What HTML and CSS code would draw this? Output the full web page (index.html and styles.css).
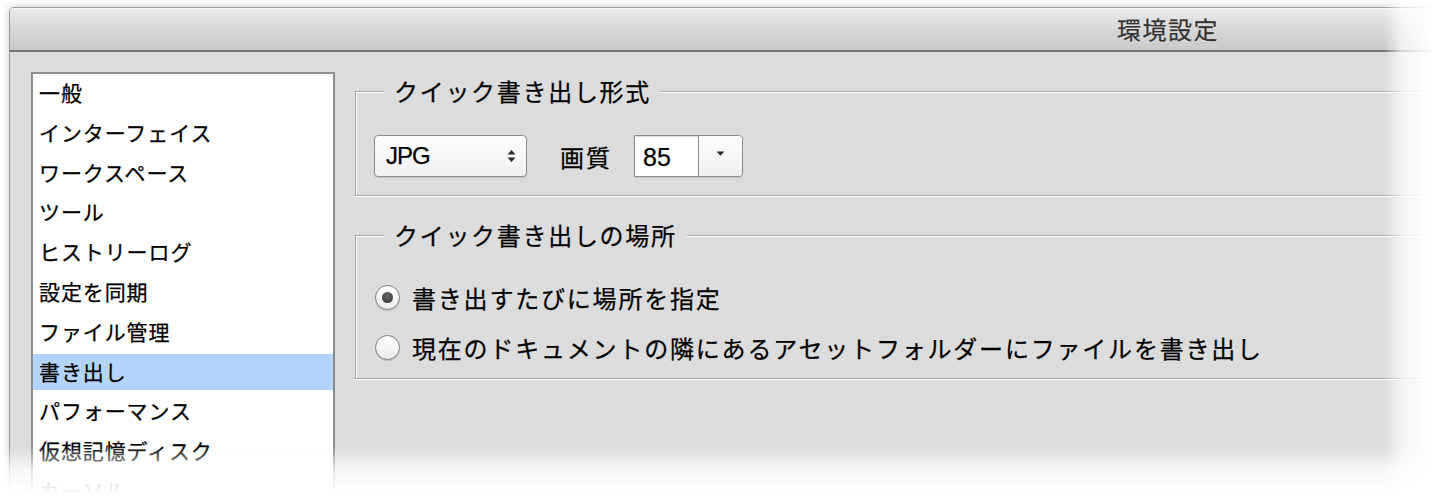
FILE: index.html
```html
<!DOCTYPE html>
<html lang="ja">
<head>
    <meta charset="UTF-8">
    <title>環境設定</title>
    <link rel="stylesheet" href="styles.css">
</head>
<body>
    <div class="window">
        <div class="titlebar">環境設定</div>
        <div class="content">
            <ul class="nav">
                <li>一般</li>
                <li>インターフェイス</li>
                <li>ワークスペース</li>
                <li>ツール</li>
                <li>ヒストリーログ</li>
                <li>設定を同期</li>
                <li>ファイル管理</li>
                <li class="current">書き出し</li>
                <li>パフォーマンス</li>
                <li>仮想記憶ディスク</li>
                <li>カーソル</li>
            </ul>

            <div class="panels">
                <div class="group">
                    <div class="group-head"><span>クイック書き出し形式</span></div>
                    <div class="group-body format-row">
                        <div class="popup">
                            <span>JPG</span>
                            <svg width="9" height="14" viewBox="0 0 9 14">
                                <path d="M0.5 5.5 L4.5 1 L8.5 5.5 Z" fill="#2a2a2a"/>
                                <path d="M0.5 8.5 L4.5 13 L8.5 8.5 Z" fill="#2a2a2a"/>
                            </svg>
                        </div>
                        <span class="label">画質</span>
                        <div class="combo">
                            <span class="combo-value">85</span>
                            <span class="combo-btn">
                                <svg width="9" height="5" viewBox="0 0 9 5">
                                    <path d="M0.5 0.5 L8.5 0.5 L4.5 4.8 Z" fill="#2a2a2a"/>
                                </svg>
                            </span>
                        </div>
                    </div>
                </div>

                <div class="group">
                    <div class="group-head"><span>クイック書き出しの場所</span></div>
                    <div class="group-body">
                        <div class="radio-row">
                            <span class="radio checked"></span>
                            <span>書き出すたびに場所を指定</span>
                        </div>
                        <div class="radio-row">
                            <span class="radio"></span>
                            <span>現在のドキュメントの隣にあるアセットフォルダーにファイルを書き出し</span>
                        </div>
                    </div>
                </div>
            </div>
        </div>
    </div>

    <div class="fade"></div>
</body>
</html>
```

FILE: styles.css
```css
* {
    margin: 0;
    padding: 0;
    box-sizing: border-box;
}

html, body {
    height: 100%;
}

body {
    background-color: #fff;
    overflow: hidden;
    font-family: "Noto Sans CJK JP", "Liberation Sans", sans-serif;
    color: #000;
    -webkit-text-stroke: 0.25px currentColor;
}

li {
    list-style: none;
}

.window {
    width: 2318px;
    height: 700px;
    margin: 7px 0 0 9px;
    border: 1px solid #9c9c9c;
    border-radius: 5px 5px 0 0;
    background-color: #dcdcdc;
    box-shadow: 0 0 9px rgba(0, 0, 0, 0.22);
}

.titlebar {
    height: 44px;
    line-height: 42px;
    text-align: center;
    font-size: 24px;
    letter-spacing: 1.5px;
    color: #333;
    text-shadow: 0 1px 0 rgba(255, 255, 255, 0.5);
    border-radius: 4px 4px 0 0;
    border-bottom: 2px solid #767676;
    background: linear-gradient(#ececec, #d9d9d9 45%, #c9c9c9);
    box-shadow: inset 0 1px 0 #f6f6f6;
}

.content {
    display: flex;
    align-items: flex-start;
    gap: 20px;
    padding: 20px 0 0 21px;
}

/* 左侧列表 */
.nav {
    width: 304px;
    height: 600px;
    flex-shrink: 0;
    background-color: #fff;
    border: 2px solid #8e8e8e;
    padding-top: 1px;
    display: flex;
    flex-direction: column;
    gap: 3.8px;
}

.nav li {
    height: 36px;
    line-height: 34px;
    padding-left: 6px;
    font-size: 21px;
    letter-spacing: 0.9px;
    white-space: nowrap;
}

.nav li.current {
    background-color: #b4d4fc;
}

/* 右侧分组 */
.panels {
    flex: 1;
    padding-top: 4px;
}

.group + .group {
    margin-top: 24px;
}

.group-head {
    display: flex;
    height: 32px;
}

.group-head::before,
.group-head::after {
    content: "";
    height: 16px;
    align-self: flex-end;
    border-top: 1px solid #a9a9a9;
}

.group-head::before {
    width: 28px;
    border-left: 1px solid #a9a9a9;
    box-shadow: inset 1px 1px 0 #fff;
}

.group-head::after {
    flex: 1;
    border-right: 1px solid #a9a9a9;
    box-shadow: inset 0 1px 0 #fff;
}

.group-head span {
    padding: 0 10px;
    line-height: 30px;
    font-size: 24px;
    letter-spacing: 1.7px;
    white-space: nowrap;
}

.group-body {
    border: 1px solid #a9a9a9;
    border-top: 0;
    box-shadow: inset 1px 0 0 #fff, 0 1px 0 #fff;
    padding: 20px 19px 6px;
}

.format-row {
    display: flex;
    align-items: center;
    padding: 27px 18px 18px;
}

.popup {
    width: 153px;
    height: 42px;
    display: flex;
    align-items: center;
    justify-content: space-between;
    padding: 0 10px 0 11px;
    border: 1px solid #8c8c8c;
    border-radius: 4px;
    background: linear-gradient(#fdfdfd, #f1f1f1);
    box-shadow: 0 1px 1px rgba(0, 0, 0, 0.12);
    font-family: "Liberation Sans", sans-serif;
    font-size: 24px;
    letter-spacing: -1px;
}

.label {
    margin: 0 22px 0 33px;
    font-size: 24px;
    letter-spacing: 2px;
}

.combo {
    display: flex;
    height: 42px;
    border: 1px solid #8c8c8c;
    border-radius: 0 4px 4px 0;
    box-shadow: 0 1px 1px rgba(0, 0, 0, 0.12);
}

.combo-value {
    width: 64px;
    line-height: 42px;
    padding-left: 8px;
    background-color: #fff;
    border-right: 1px solid #8c8c8c;
    box-shadow: inset 0 1px 1px rgba(0, 0, 0, 0.15);
    font-family: "Liberation Sans", sans-serif;
    font-size: 25px;
}

.combo-btn {
    width: 43px;
    display: flex;
    justify-content: center;
    padding-top: 15px;
    border-radius: 0 3px 3px 0;
    background: linear-gradient(#fdfdfd, #efefef);
}

.radio-row {
    height: 50px;
    display: flex;
    align-items: center;
    font-size: 24px;
    letter-spacing: 1.8px;
    white-space: nowrap;
}

.radio {
    width: 25px;
    height: 25px;
    margin-right: 12px;
    flex-shrink: 0;
    display: flex;
    align-items: center;
    justify-content: center;
    border: 1px solid #7f7f7f;
    border-radius: 50%;
    background: linear-gradient(#ffffff, #ececec);
    box-shadow: 0 1px 1px rgba(0, 0, 0, 0.15);
}

.radio.checked::after {
    content: "";
    width: 11px;
    height: 11px;
    border-radius: 50%;
    background: radial-gradient(circle at 50% 35%, #6a6a6a, #2c2c2c);
}

/* 截图边缘的淡出效果 */
.fade {
    position: fixed;
    top: 0;
    left: 0;
    right: 0;
    bottom: 0;
    pointer-events: none;
    background:
        linear-gradient(to right, rgba(255, 255, 255, 0) 1384px, rgba(255, 255, 255, 0.7) 1402px, #fff 1434px),
        linear-gradient(to bottom, rgba(255, 255, 255, 0) 446px, rgba(255, 255, 255, 0.75) 470px, #fff 494px);
}
```
